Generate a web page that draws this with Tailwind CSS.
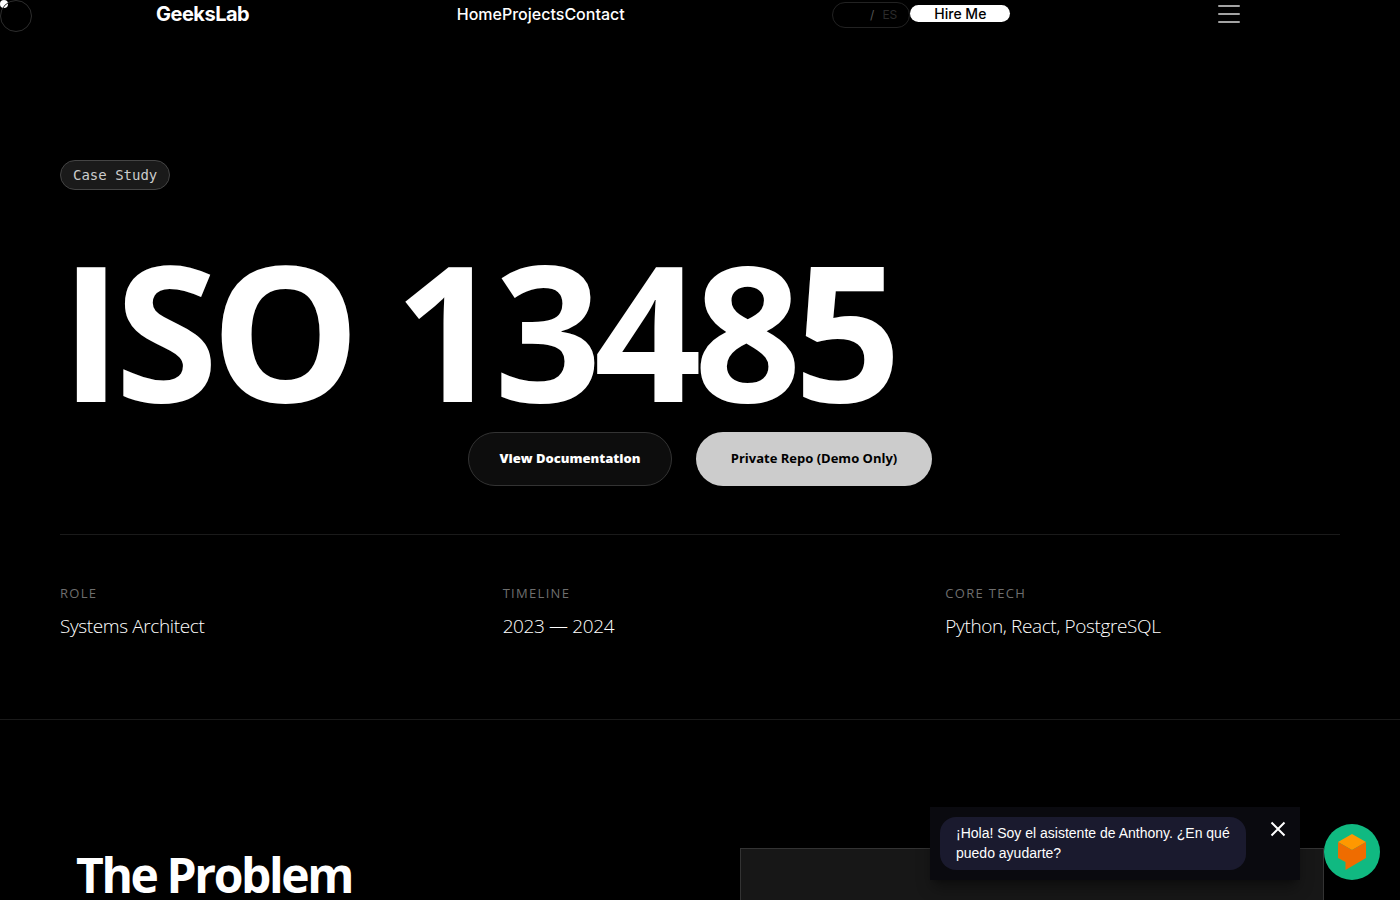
<!DOCTYPE html>
<html lang="en">
<head>
    <meta charset="utf-8"/>
    <meta content="width=device-width, initial-scale=1.0" name="viewport"/>
    <title>ISO 13485 | GeeksLab</title>
    <script src="https://cdn.jsdelivr.net/npm/@tailwindcss/browser@4"></script>
</head>
<body class="bg-black text-white font-['Open_Sans',sans-serif] overflow-x-hidden">
    <!-- Custom cursor -->
    <div class="fixed top-0 left-0 size-2 rounded-full bg-white z-50 pointer-events-none"></div>
    <div class="fixed top-0 left-0 size-8 rounded-full border border-[#2d2d2d] z-50 pointer-events-none"></div>

    <!-- Navbar -->
    <nav class="flex items-center justify-between h-7 pl-39 pr-40 font-['Inter',sans-serif]">
        <a href="#" class="text-xl leading-7 font-bold tracking-tight">GeeksLab</a>
        <div class="flex text-base font-medium">
            <a href="#">Home</a>
            <a href="#">Projects</a>
            <a href="#">Contact</a>
        </div>
        <div class="flex items-center">
            <button type="button" class="flex items-center justify-end gap-2 mt-px w-[78px] h-[26px] px-3 rounded-full border border-[#222] text-xs">
                <span class="text-[#555]">/</span>
                <span class="text-[#2b2b2b]">ES</span>
            </button>
            <a href="#" class="mb-px px-6 rounded-full bg-white text-black text-sm leading-[17px] font-medium">Hire Me</a>
        </div>
        <button type="button" aria-label="Menu" class="flex flex-col gap-1.5 w-[22px]">
            <span class="h-0.5 w-full rounded-full bg-[#a3a3a3]"></span>
            <span class="h-0.5 w-full rounded-full bg-[#a3a3a3]"></span>
            <span class="h-0.5 w-full rounded-full bg-[#a3a3a3]"></span>
        </button>
    </nav>

    <!-- Hero -->
    <header class="border-b border-[#1a1a1a] pt-33 pb-[78px]">
        <div class="max-w-7xl mx-auto">
            <span class="inline-block align-top px-3 py-1 rounded-full border border-[#444] bg-[#1a1a1a] text-[#ccc] text-sm font-['DejaVu_Sans_Mono',monospace]">Case Study</span>
            <h1 class="mt-12 mb-3 text-[188px] leading-[182px] font-bold tracking-[-0.04em] whitespace-nowrap">ISO 13485</h1>
            <div class="flex items-center justify-center gap-6">
                <a href="#" class="flex items-center justify-center h-[54px] w-51 rounded-full border border-[#333] bg-[#0d0d0d] text-[13px] font-extrabold">View Documentation</a>
                <button type="button" class="h-[54px] w-59 rounded-full bg-[#ccc] text-black text-[13px] font-bold">Private Repo (Demo Only)</button>
            </div>
            <dl class="mt-12 pt-12 border-t border-[#1a1a1a] grid grid-cols-3 gap-12">
                <div>
                    <dt class="text-[13px] leading-5 tracking-widest text-[#6e6e6e]">ROLE</dt>
                    <dd class="mt-2 text-[19px] leading-[30px] font-light tracking-[-0.02em] text-white">Systems Architect</dd>
                </div>
                <div>
                    <dt class="text-[13px] leading-5 tracking-widest text-[#6e6e6e]">TIMELINE</dt>
                    <dd class="mt-2 text-[19px] leading-[30px] font-light tracking-[-0.02em] text-white">2023 — 2024</dd>
                </div>
                <div>
                    <dt class="text-[13px] leading-5 tracking-widest text-[#6e6e6e]">CORE TECH</dt>
                    <dd class="mt-2 text-[19px] leading-[30px] font-light tracking-[-0.02em] text-white">Python, React, PostgreSQL</dd>
                </div>
            </dl>
        </div>
    </header>

    <!-- Problem -->
    <section class="pt-32 pb-32">
        <div class="max-w-7xl mx-auto px-4 grid grid-cols-2 gap-20">
            <h2 class="text-5xl leading-[54px] font-bold tracking-tighter">The Problem</h2>
            <div class="h-96 border border-[#333] bg-[#171717]"></div>
        </div>
    </section>

    <!-- Chat widget -->
    <div class="fixed bottom-5 right-25 flex items-start justify-between w-[370px] p-2.5 bg-[#0a0a0f] shadow-lg shadow-black/40 font-['Liberation_Sans',sans-serif]">
        <p class="w-[306px] px-4 pt-1.5 pb-[7px] rounded-2xl bg-[#1a1a2e] text-sm">¡Hola! Soy el asistente de Anthony. ¿En qué puedo ayudarte?</p>
        <button type="button" aria-label="Close" class="p-1">
            <svg class="size-4" viewBox="0 0 16 16" fill="none" stroke="white" stroke-width="2"><path d="M1.500 1.500l13 13M14.500 1.500l-13 13"/></svg>
        </button>
    </div>
    <button type="button" aria-label="Open chat" class="fixed bottom-5 right-5 size-14 rounded-full bg-[#10b981]">
        <svg class="size-14" viewBox="0 0 56 56">
            <path fill="#ff9800" d="M28 10l14 8-14 8-14-8z"/>
            <path fill="#ef6c00" d="M14 18l14 8 14-8v16L21.500 46v-8L14 34z"/>
        </svg>
    </button>
</body>
</html>
